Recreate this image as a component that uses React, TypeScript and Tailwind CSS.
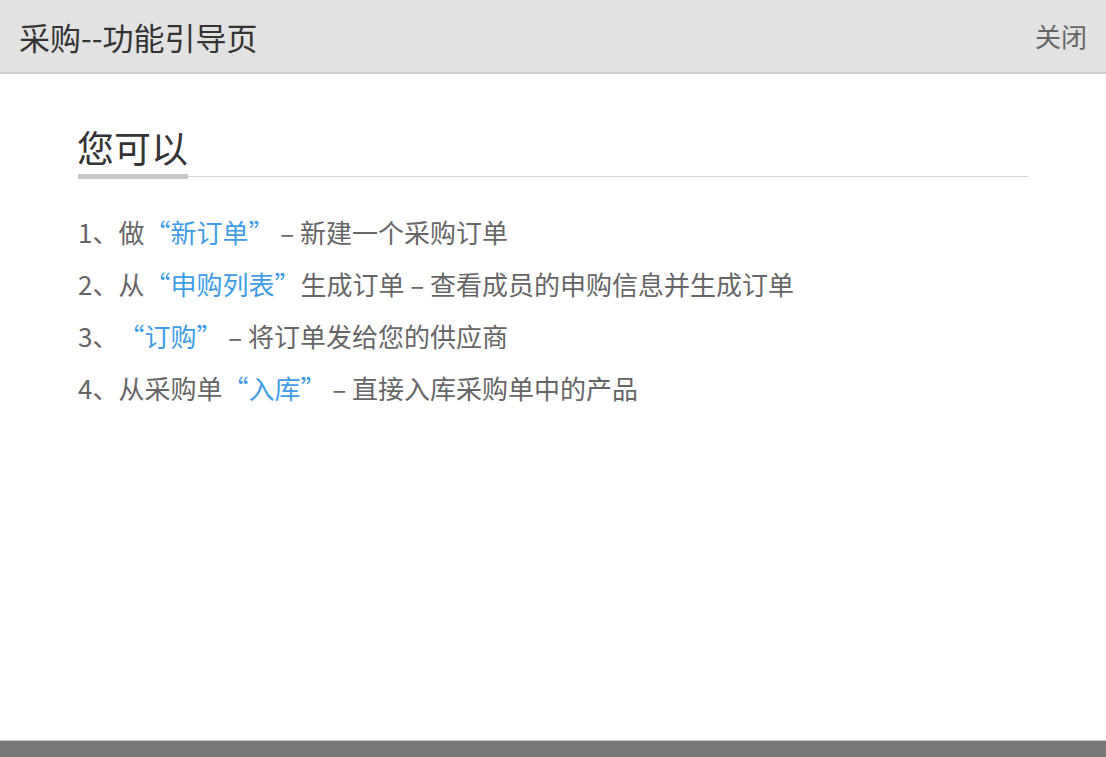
import React from "react";

const font = { fontFamily: '"Noto Sans CJK SC", "Noto Sans", sans-serif' };

export default function App() {
  const items: React.ReactNode[] = [
    <>1、做<span className="text-[#3f9de6]">“新订单”</span> – 新建一个采购订单</>,
    <>2、从<span className="text-[#3f9de6]">“申购列表”</span>生成订单 – 查看成员的申购信息并生成订单</>,
    <>3、<span className="text-[#3f9de6]">“订购”</span> – 将订单发给您的供应商</>,
    <>4、从采购单<span className="text-[#3f9de6]">“入库”</span> – 直接入库采购单中的产品</>,
  ];
  return (
    <div lang="zh-CN" className="w-full h-[757px] flex flex-col bg-white overflow-hidden [text-spacing-trim:space-all]" style={font}>
      <div className="h-[74px] shrink-0 bg-[#e2e2e2] border-b-2 border-[#cfcfcf] flex items-center justify-between pl-[19px] pr-[19px]">
        <div className="text-[31px] leading-none text-[#333]">采购--功能引导页</div>
        <div className="text-[26px] leading-none text-[#666]">关闭</div>
      </div>
      <div className="flex-1 px-[78px] pt-[55px]">
        <div className="text-[37px] leading-none text-[#333] -ml-[1px]">您可以</div>
        <div className="flex items-center mt-[8px]">
          <div className="w-[110px] h-[5px] bg-[#c8c8c8]" />
          <div className="flex-1 h-px bg-[#d6d6d6]" />
        </div>
        <ul className="mt-[27px] text-[26px] leading-[52px] text-[#666]">
          {items.map((it, i) => (
            <li key={i} className="whitespace-nowrap">{it}</li>
          ))}
        </ul>
      </div>
      <div className="h-[17px] shrink-0 bg-[#777] border-t border-[#c8c8c8]" />
    </div>
  );
}
